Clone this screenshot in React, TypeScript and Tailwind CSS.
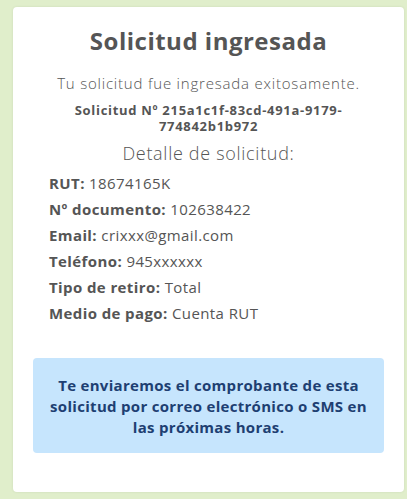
export default function App() {
  const rows: [string, string][] = [
    ["RUT:", "18674165K"],
    ["Nº documento:", "102638422"],
    ["Email:", "crixxx@gmail.com"],
    ["Teléfono:", "945xxxxxx"],
    ["Tipo de retiro:", "Total"],
    ["Medio de pago:", "Cuenta RUT"],
  ];

  return (
    <div
      className="min-h-[499px] bg-[#e0eecb] pt-[7px] pl-[13px] pr-[3px] pb-[7px] text-[#555555]"
      style={{ fontFamily: '"Open Sans", "Noto Sans", sans-serif' }}
    >
      <div className="bg-white rounded-[4px] shadow-[0_0_3px_rgba(0,0,0,0.08)] h-[485px] px-5 pt-[16px]">
        <h1 className="text-center text-[24px] font-bold leading-[36px] tracking-[0.5px]">
          Solicitud ingresada
        </h1>
        <p className="text-center text-[15px] font-light mt-[14px] leading-5 tracking-[0.8px]">
          Tu solicitud fue ingresada exitosamente.
        </p>
        <p className="text-center text-[13px] font-bold leading-4 mt-[9px] px-8 tracking-[0.7px]">
          Solicitud Nº 215a1c1f-83cd-491a-9179-774842b1b972
        </p>
        <p className="text-center text-[18px] font-light mt-[7px] leading-6 tracking-[0.7px]">
          Detalle de solicitud:
        </p>
        <div className="flex flex-col gap-[4px] pl-4 mt-[7px]">
          {rows.map(([k, v]) => (
            <p key={k} className="text-[15px] leading-[22px] tracking-[0.4px]">
              <span className="font-bold">{k}</span> {v}
            </p>
          ))}
        </div>
        <div className="mt-[34px] bg-[#c6e5fd] rounded-[4px] px-4 pt-[17px] pb-[15px]">
          <p className="text-center text-[15px] font-bold leading-[21px] tracking-[0.3px] text-[#1e3f72]">
            Te enviaremos el comprobante de esta solicitud por correo
            electrónico o SMS en las próximas horas.
          </p>
        </div>
      </div>
    </div>
  );
}
